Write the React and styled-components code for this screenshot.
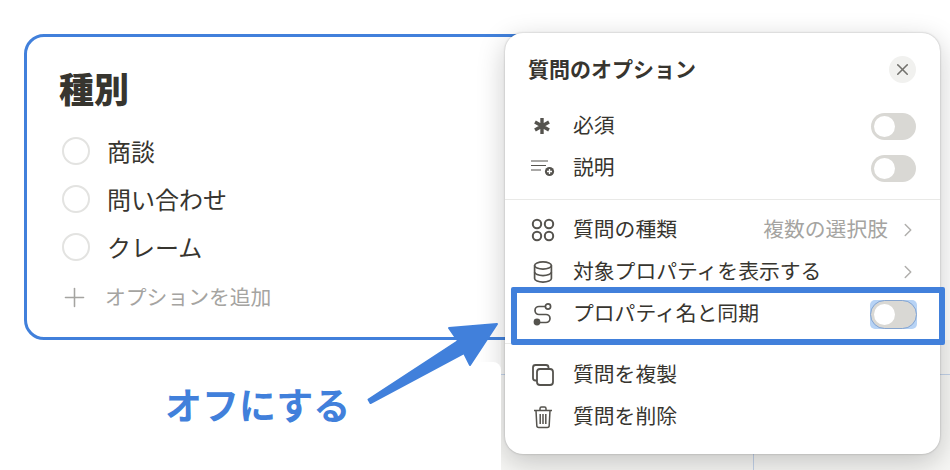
import React from "react";
import styled, { createGlobalStyle } from "styled-components";
import { X, ChevronRight, Plus } from "lucide-react";

const GlobalStyle = createGlobalStyle`
  html, body {
    margin: 0;
    padding: 0;
    background: #fff;
  }
  body {
    font-family: "Noto Sans CJK JP", "Noto Sans", sans-serif;
  }
`;

const Page = styled.div`
  position: relative;
  width: 950px;
  height: 470px;
  overflow: hidden;
  background: #fff;
  padding: 34px 0 0 24px;
  box-sizing: border-box;
`;

/* gray app backdrop peeking out below the card, behind the popover */
const Backdrop = styled.div`
  position: absolute;
  left: 501px;
  top: 340px;
  right: 0;
  bottom: 0;
  background: #f7f7f5;
  &::before {
    content: "";
    position: absolute;
    left: 0;
    top: 34px;
    right: 0;
    height: 1px;
    background: #c3d3ea;
  }
  &::after {
    content: "";
    position: absolute;
    left: 252px;
    top: 0;
    bottom: 0;
    width: 1px;
    background: #c3d3ea;
  }
`;

/* white sheet that sits over the popover shadow, bottom left */
const Sheet = styled.div`
  position: absolute;
  z-index: 2;
  left: 400px;
  top: 362px;
  width: 101px;
  height: 108px;
  background: #fff;
  border-top-right-radius: 8px;
`;

const Card = styled.div`
  position: relative;
  width: 520px;
  height: 306px;
  box-sizing: border-box;
  border: 3px solid #4180db;
  border-radius: 20px;
  background: #fff;
  padding: 27px 0 0 32px;
  color: #37352f;
`;

const Title = styled.h2`
  margin: 0 0 15px;
  font-size: 35px;
  line-height: 48px;
  font-weight: 900;
`;

const Choice = styled.div`
  display: flex;
  align-items: center;
  gap: 17px;
  height: 48px;
  padding-left: 3px;
  font-size: 24px;
  & > span:last-child {
    padding-bottom: 2px;
  }
`;

const Radio = styled.span`
  width: 24px;
  height: 24px;
  border: 2px solid #e3e3e1;
  border-radius: 50%;
`;

const AddRow = styled.div`
  display: flex;
  align-items: center;
  gap: 15px;
  height: 48px;
  margin-top: 2px;
  font-size: 20.8px;
  color: #a5a4a1;
  & > span {
    padding-bottom: 3px;
  }
`;

const Popover = styled.div`
  position: absolute;
  z-index: 1;
  left: 505px;
  top: 33px;
  width: 435px;
  height: 421px;
  box-sizing: border-box;
  background: #fff;
  border-radius: 18px;
  box-shadow: 0 0 2px rgba(15, 15, 15, 0.3), 0 8px 28px rgba(15, 15, 15, 0.22);
  color: #37352f;
  display: flex;
  flex-direction: column;
`;

const PopHead = styled.div`
  display: flex;
  align-items: center;
  justify-content: space-between;
  height: 72px;
  padding: 0 24px 0 23px;
`;

const PopTitle = styled.div`
  font-size: 21px;
  font-weight: 700;
  padding-bottom: 2px;
`;

const CloseBtn = styled.span`
  width: 27px;
  height: 27px;
  border-radius: 50%;
  background: #f1f1ef;
  color: #73726e;
  display: flex;
  align-items: center;
  justify-content: center;
`;

const Section = styled.div`
  padding: ${(p) => p.$pad || "0"};
  border-bottom: ${(p) => (p.$line ? "1px solid #e9e9e7" : "none")};
`;

const Row = styled.div`
  display: flex;
  align-items: center;
  height: 42px;
  padding: 0 24px 0 26px;
  font-size: 20.8px;
  color: #37352f;
`;

const IconSlot = styled.span`
  width: 42px;
  flex-shrink: 0;
  display: flex;
  align-items: center;
  color: #55534e;
`;

const Label = styled.span`
  flex: 1;
  white-space: nowrap;
  padding-bottom: 4px;
`;

const Hint = styled.span`
  color: #a5a4a1;
  margin-right: 9px;
  padding-bottom: 4px;
`;

const Chevron = styled(ChevronRight)`
  color: #b0afac;
  margin-right: -3px;
`;

const Toggle = styled.span`
  position: relative;
  width: 45px;
  height: 27px;
  border-radius: 14px;
  background: #d9d8d4;
  box-sizing: border-box;
  outline: ${(p) => (p.$focus ? "1px solid #86a5cf" : "none")};
  &::before {
    content: ${(p) => (p.$focus ? '""' : "none")};
    position: absolute;
    z-index: -1;
    inset: -1px;
    border-radius: 5px;
    background: #b7d3f5;
  }
  &::after {
    content: "";
    position: absolute;
    left: 3px;
    top: 3px;
    width: 21px;
    height: 21px;
    border-radius: 50%;
    background: #fff;
  }
`;

const Highlight = styled.div`
  position: absolute;
  z-index: 3;
  left: 511px;
  top: 287px;
  width: 434px;
  height: 58px;
  box-sizing: border-box;
  border: 6px solid #4180db;
  border-radius: 2px;
  pointer-events: none;
`;

const Callout = styled.div`
  position: absolute;
  z-index: 3;
  left: 165px;
  top: 379px;
  font-size: 37px;
  line-height: 50px;
  font-weight: 700;
  color: #4180db;
  white-space: nowrap;
`;

const Arrow = styled.svg`
  position: absolute;
  z-index: 3;
  left: 360px;
  top: 320px;
  pointer-events: none;
`;

const AsteriskIcon = () => (
  <svg width="22" height="22" viewBox="0 0 22 22" fill="none" stroke="#55534e" strokeWidth="3.4">
    <path d="M11 3v16M4 7l14 8M18 7L4 15" />
  </svg>
);

const DescIcon = () => (
  <svg width="24" height="20" viewBox="0 0 24 20" fill="none" stroke="#55534e" strokeWidth="1.2">
    <path d="M0 3h17M0 7.5h15M0 12h10" />
    <circle cx="18.5" cy="13.5" r="4.6" fill="#55534e" stroke="none" />
    <path d="M16 13.5h5M18.5 11v5" stroke="#fff" strokeWidth="1.3" />
  </svg>
);

const OptionsIcon = () => (
  <svg width="24" height="24" viewBox="0 0 24 24" fill="none" stroke="#55534e" strokeWidth="2">
    <circle cx="6" cy="6" r="4.2" />
    <circle cx="18" cy="6" r="4.2" />
    <circle cx="6" cy="18" r="4.2" />
    <circle cx="18" cy="18" r="4.2" />
  </svg>
);

const DatabaseIcon = () => (
  <svg width="24" height="24" viewBox="0 0 24 24" fill="none" stroke="#55534e" strokeWidth="1.7">
    <ellipse cx="12" cy="5.5" rx="8.4" ry="3.6" />
    <path d="M3.6 5.5v13c0 2 3.8 3.6 8.4 3.6s8.4-1.6 8.4-3.6v-13" />
    <path d="M3.6 12c0 2 3.8 3.6 8.4 3.6s8.4-1.6 8.4-3.6" />
  </svg>
);

const SyncIcon = () => (
  <svg width="24" height="24" viewBox="0 0 24 24" fill="none" stroke="#55534e" strokeWidth="1.7">
    <circle cx="17" cy="4.5" r="2.6" />
    <path d="M14 4.5H8a4 4 0 0 0 0 8h7a4 4 0 0 1 0 8H7" strokeLinecap="round" />
    <circle cx="6" cy="20" r="3.4" fill="#55534e" stroke="none" />
  </svg>
);

const CopyIcon = () => (
  <svg width="24" height="24" viewBox="0 0 24 24" fill="none" stroke="#55534e" strokeWidth="1.8">
    <rect x="6" y="6" width="16" height="16" rx="3" />
    <path d="M6 17.5H4.5A2.5 2.5 0 0 1 2 15V4.5A2.5 2.5 0 0 1 4.5 2H15a2.5 2.5 0 0 1 2.5 2.5V6" />
  </svg>
);

const TrashIcon = () => (
  <svg width="24" height="24" viewBox="0 0 24 24" fill="none" stroke="#55534e" strokeWidth="1.5">
    <path d="M3 5.5h18M9 5.5V3.5a1.5 1.5 0 0 1 1.5-1.5h3A1.5 1.5 0 0 1 15 3.5v2" />
    <path d="M5 5.5l.8 15a2 2 0 0 0 2 2h8.4a2 2 0 0 0 2-2l.8-15" />
    <path d="M9.2 9v10M12 9v10M14.8 9v10" />
  </svg>
);

export default function App() {
  return (
    <Page>
      <GlobalStyle />
      <Backdrop />
      <Sheet />
      <Card>
        <Title>種別</Title>
        <Choice>
          <Radio />
          <span>商談</span>
        </Choice>
        <Choice>
          <Radio />
          <span>問い合わせ</span>
        </Choice>
        <Choice>
          <Radio />
          <span>クレーム</span>
        </Choice>
        <AddRow>
          <Plus size={31} strokeWidth={1.2} color="#a5a4a1" />
          <span>オプションを追加</span>
        </AddRow>
      </Card>

      <Popover>
        <PopHead>
          <PopTitle>質問のオプション</PopTitle>
          <CloseBtn>
            <X size={19} strokeWidth={2} />
          </CloseBtn>
        </PopHead>
        <Section $line $pad="0 0 10px">
          <Row>
            <IconSlot>
              <AsteriskIcon />
            </IconSlot>
            <Label>必須</Label>
            <Toggle />
          </Row>
          <Row>
            <IconSlot>
              <DescIcon />
            </IconSlot>
            <Label>説明</Label>
            <Toggle />
          </Row>
        </Section>
        <Section $line $pad="9px 0 8px">
          <Row>
            <IconSlot>
              <OptionsIcon />
            </IconSlot>
            <Label>質問の種類</Label>
            <Hint>複数の選択肢</Hint>
            <Chevron size={22} strokeWidth={1.6} />
          </Row>
          <Row>
            <IconSlot>
              <DatabaseIcon />
            </IconSlot>
            <Label>対象プロパティを表示する</Label>
            <Chevron size={22} strokeWidth={1.6} />
          </Row>
          <Row>
            <IconSlot>
              <SyncIcon />
            </IconSlot>
            <Label>プロパティ名と同期</Label>
            <Toggle $focus />
          </Row>
        </Section>
        <Section $pad="10px 0 0">
          <Row>
            <IconSlot>
              <CopyIcon />
            </IconSlot>
            <Label>質問を複製</Label>
          </Row>
          <Row>
            <IconSlot>
              <TrashIcon />
            </IconSlot>
            <Label>質問を削除</Label>
          </Row>
        </Section>
      </Popover>

      <Highlight />
      <Arrow width="150" height="90" viewBox="0 0 150 90">
        <path
          d="M8.5 79.5 L98 21 L89 8 L137 4 L110 45 L104 33 L10.5 83 Z"
          fill="#4180db"
          stroke="#4180db"
          strokeWidth="2"
          strokeLinejoin="round"
        />
      </Arrow>
      <Callout>オフにする</Callout>
    </Page>
  );
}
